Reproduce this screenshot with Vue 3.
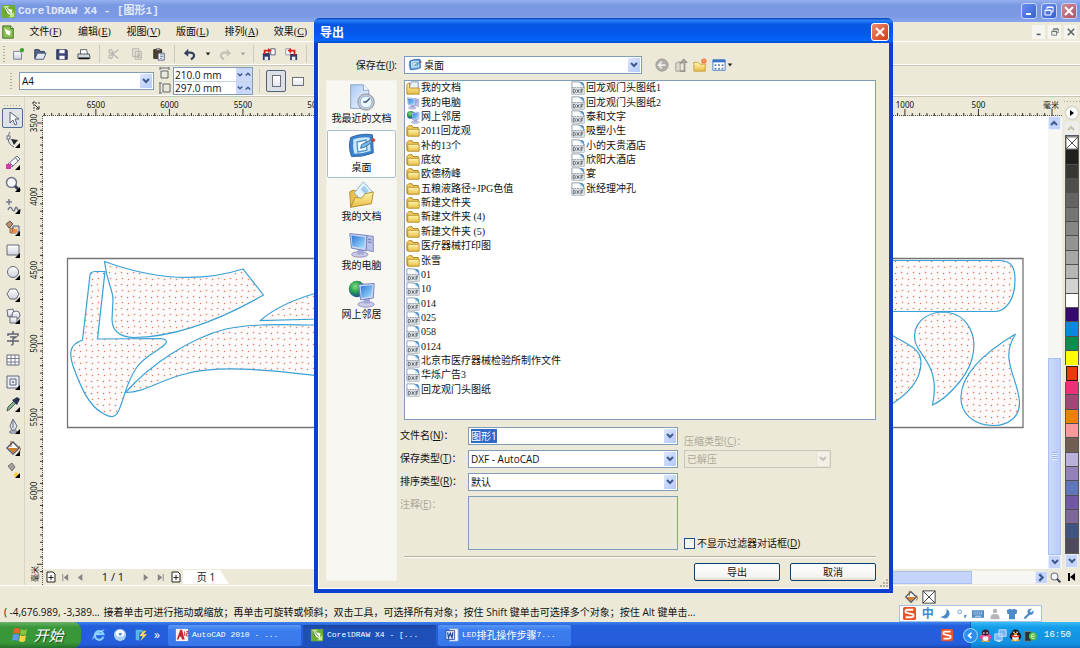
<script setup>
import { onMounted, ref } from 'vue'

const menus = [['文件', 'F'], ['编辑', 'E'], ['视图', 'V'], ['版面', 'L'], ['排列', 'A'], ['效果', 'C']]
const tools = [
  ['pick', '挑选', 0], ['node', '形状', 1], ['erase', '裁剪', 1], ['lens', '缩放', 1], ['curve', '手绘', 1], ['smart', '智能填充', 1],
  ['rect', '矩形', 1], ['oval', '椭圆', 1], ['poly', '多边形', 1], ['shapes', '基本形状', 1], ['text', '文本', 0], ['table', '表格', 0],
  ['blend', '交互', 1], ['drop', '滴管', 1], ['pen', '轮廓', 1], ['bucket', '填充', 1], ['ifill', '交互式填充', 1],
]
const swatches = [
  '#20211c', '#3a3732', '#504d4a', '#666364', '#757575', '#868686', '#949494', '#a7a7a6', '#b5b5b4', '#d2d2d1', '#ffffff',
  '#37096f', '#0a88dc', '#098c4c', '#fffb06', '#e93c0c', '#ee3078', '#a14776', '#ed8107', '#fa989b', '#705f52', '#bbb0d9',
  '#9381b9', '#6076b9', '#7058a6', '#7d6999', '#405482', '#50485c',
]
const folders = ['2011回龙观', '补的13个', '底纹', '欧德杨峰', '五粮液路径+JPG色值', '新建文件夹', '新建文件夹 (4)', '新建文件夹 (5)', '医疗器械打印图', '张雪']
const drawings = [
  '01', '10', '014', '025', '058', '0124', '北京市医疗器械检验所制作文件', '华烁广告3', '回龙观门头图纸',
  '回龙观门头图纸1', '回龙观门头图纸2', '泰和文字', '吸塑小生', '小的天贵酒店', '欣阳大酒店', '宴', '张经理冲孔',
]
const files = [
  { icon: 'docs', name: '我的文档' }, { icon: 'computer', name: '我的电脑' }, { icon: 'network', name: '网上邻居' },
  ...folders.map((name) => ({ icon: 'folder', name })),
  ...drawings.map((name) => ({ icon: 'dxf', name })),
]
const places = [['recent', '我最近的文档'], ['desktop', '桌面'], ['mydocs', '我的文档'], ['computer', '我的电脑'], ['network', '网上邻居']]

const STEP = 7.355
const hTicks = Array.from({ length: 139 }, (_, i) => 1009 - i * STEP)
const hLabels = Array.from({ length: 13 }, (_, i) => ({ x: 1009 - (i + 1) * STEP * 10, t: (i + 1) * 500 }))
  .filter((l) => l.x < 290 || l.x > 850)
const vTicks = Array.from({ length: 62 }, (_, i) => 7 + i * STEP)
const vLabels = [3500, 4000, 4500, 5000, 5500, 6000].map((t, i) => ({ y: 7 + i * STEP * 10, t }))

const shapes = [
  'M104.5 261.5 Q180 289 243 269 L263.5 295 Q190 337 134 337.5 C118 337 112 330 112 319 L113 300 C113 289 107 284 104.5 261.5Z',
  'M90 275 Q90 272 95 271.5 L105 271.5 L97.5 339 L160 338.5 Q168 339 166 343 C164 348 145 355 137 367 C125 384 125 398 118 412 Q114 420 104 414 C88 406 80 385 73 366 C69 353 69 345 82.5 340Z',
  'M125.5 392.5 C150 365 190 338 226 329 C255 323 285 325 320 325 L320 376 C280 371 220 364 185 374 C160 380 143 393 125.5 392.5Z',
  'M260.5 320.5 Q280 303 320 292 L320 319Z',
  'M885 260.5 H1000 C1012 261 1015 268 1015 280 C1015 298 1007 311 995 311.5 H885Z',
  'M942 312 C924 313 912 325 915 341 C918 356 941 365 932.5 405 C948 398 966 377 971 362 C980 334 966 312 942 312Z',
  'M1015.5 334 C999 360 1018 377 1019.5 402 C1020 417 1008 426 993 425.5 C972 425 960 412 961 396 C962 374 982 354 1015.5 334Z',
  'M885 331 C903 343 921 347 921 362 C921 381 907 396 885 408Z',
]
const fileName = ref('图形1')
const nameBox = ref(null)
onMounted(() => { nameBox.value.focus(); nameBox.value.select() })
</script>

<template>
  <svg class="defs" aria-hidden="true">
    <defs>
      <linearGradient id="gFolder" x1="0" y1="0" x2="0" y2="1"><stop offset="0" stop-color="#fff6b0" /><stop offset="1" stop-color="#e8bd45" /></linearGradient>
      <linearGradient id="gScreen" x1="0" y1="0" x2="1" y2="1"><stop offset="0" stop-color="#2f78d8" /><stop offset="1" stop-color="#a6e4fc" /></linearGradient>
      <linearGradient id="gPaper" x1="0" y1="0" x2="1" y2="1"><stop offset="0" stop-color="#a9c8f4" /><stop offset="1" stop-color="#f4f9ff" /></linearGradient>
      <radialGradient id="gGlobe" cx=".4" cy=".35" r=".7"><stop offset="0" stop-color="#7fe07c" /><stop offset=".5" stop-color="#2a9c52" /><stop offset="1" stop-color="#123f9c" /></radialGradient>
      <linearGradient id="gShape" x1="0" y1="0" x2="0" y2="1"><stop offset="0" stop-color="#fff" /><stop offset="1" stop-color="#ced0dc" /></linearGradient>
      <pattern id="dots" width="12" height="12" patternUnits="userSpaceOnUse">
        <rect width="12" height="12" fill="#fffafa" />
        <g fill="#e0805f"><circle cx="2.500" cy="2.500" r=".8" /><circle cx="8.500" cy="3.500" r=".8" /><circle cx="1.500" cy="8.500" r=".8" /></g><circle cx="7.500" cy="9.500" r=".8" fill="#8d86a0" />
      </pattern>
    </defs>
    <symbol id="i-corel" viewBox="0 0 16 16"><rect x="1" y="1" width="14" height="14" rx="1" fill="#6cae35" /><path d="M2 2h7l-5 5zM8 14l6-6v6z" fill="#c8e59c" /><path d="M3 3l5 2 4 1-1 6-4-2z" fill="#fff" /><path d="M5 4l5 6M3 3l3 7" stroke="#4c8a28" /></symbol>
    <symbol id="i-doc" viewBox="0 0 16 16"><path d="M2 1h9l3 3v11H2z" fill="#8cc152" stroke="#35631f" /><path d="M11 1v3h3" fill="#fff" stroke="#35631f" /><path d="M4 4l4 2 3 1-1 5-4-2z" fill="#fff" /></symbol>
    <symbol id="i-new" viewBox="0 0 16 16"><path d="M3 5h7l2 2v7H3z" fill="url(#gShape)" stroke="#6d7592" /><circle cx="12.500" cy="3.500" r="2.500" fill="#39a32c" /></symbol>
    <symbol id="i-open" viewBox="0 0 16 16"><path d="M2 13V3h5l1 2h5v3" fill="#56648c" stroke="#293452" /><path d="M2 14l3-7h10l-3 7z" fill="#e4e7f1" stroke="#3d4a70" /></symbol>
    <symbol id="i-save" viewBox="0 0 16 16"><path d="M2 3h11l1 1v10H2z" fill="#3f4678" stroke="#242a50" /><path d="M5 3h6v4H5zM5 10h6v4H5z" fill="#f5f5fa" /></symbol>
    <symbol id="i-print" viewBox="0 0 16 16"><path d="M4 8V3h7l1 5" fill="#fff" stroke="#545a63" /><path d="M1 8h13l1 5H1z" fill="#d4d9df" stroke="#3f4b55" /><path d="M2 13h12" stroke="#111" stroke-width="2" /></symbol>
    <symbol id="i-cut" viewBox="0 0 16 16"><g fill="none" stroke="#b9b8b2" stroke-width="1.500"><path d="M12 3L5 8l7 5" /><circle cx="3" cy="5" r="2" /><circle cx="3" cy="11" r="2" /><path d="M4.500 6l2 2-2 2" /></g></symbol>
    <symbol id="i-copy" viewBox="0 0 16 16"><path d="M3 2h7v9H3zM6 5h7v9H6z" fill="#e4e2d7" stroke="#b3b1a8" /><path d="M8 8h4M8 10h4M8 12h4" stroke="#b3b1a8" /></symbol>
    <symbol id="i-paste" viewBox="0 0 16 16"><path d="M2 3h9v10H2z" fill="#4e402d" stroke="#2b251c" /><path d="M5 2h4v2H5z" fill="#ccc" stroke="#555" /><path d="M7 7h7v8H7z" fill="#fff" stroke="#4c5880" /><path d="M9 9h4M9 11h4M9 13h3" stroke="#6a7698" /></symbol>
    <symbol id="i-undo" viewBox="0 0 16 16"><path d="M9 14c5-2 5-8-1-7.500H4" fill="none" stroke="#36405c" stroke-width="2.500" /><path d="M1 7l5-5v9z" fill="#36405c" /></symbol>
    <symbol id="i-redo" viewBox="0 0 16 16"><path d="M7 14c-5-2-5-8 1-7.500h4" fill="none" stroke="#c3c1b8" stroke-width="2.500" /><path d="M15 7l-5-5v9z" fill="#c3c1b8" /></symbol>
    <symbol id="i-import" viewBox="0 0 16 16"><path d="M1 7h8v8H1z" fill="#313a67" /><path d="M3 11h4v4H3z" fill="#e9eaf2" /><path d="M10 2h5v7h-5z" fill="#fff" stroke="#4a5070" /><path d="M3 8V4h5" fill="none" stroke="#d3251c" stroke-width="2" /><path d="M7 1l4 3-4 3z" fill="#d3251c" /></symbol>
    <symbol id="i-export" viewBox="0 0 16 16"><path d="M2 2h5v7H2z" fill="#fff" stroke="#8a8da0" /><path d="M7 8h8v7H7z" fill="#313a67" /><path d="M9 11h4v4H9z" fill="#e9eaf2" /><path d="M12 9V4H7" fill="none" stroke="#d3251c" stroke-width="2" /><path d="M8 1L4 4l4 3z" fill="#d3251c" /></symbol>
    <symbol id="i-launch" viewBox="0 0 16 16"><path d="M1 2h11v7H1z" fill="#fff" stroke="#313a67" /><path d="M1 3.500h11" stroke="#313a67" stroke-width="3" /></symbol>
    <symbol id="i-pick" viewBox="0 0 16 16"><path d="M5 2v11l3-3 2 5 2-1-2-5h4z" fill="#fff" stroke="#586078" /></symbol>
    <symbol id="i-node" viewBox="0 0 16 16"><path d="M5 0C2 4 2 12 9 15" fill="none" stroke="#666c86" /><rect x="2" y="4" width="3" height="3" fill="#fff" stroke="#666c86" /><path d="M6 7l7 1-4 5z" fill="#1c2531" /></symbol>
    <symbol id="i-erase" viewBox="0 0 16 16"><path d="M3 10l9-8 3 3-8 8z" fill="#f8f8fc" stroke="#686c85" /><path d="M5 9l3 3M10 3l3 4" stroke="#686c85" /><rect x="1" y="10" width="5" height="5" fill="#db36a8" /></symbol>
    <symbol id="i-lens" viewBox="0 0 16 16"><circle cx="6.500" cy="6.500" r="5" fill="#f5f7fb" stroke="#6c7288" stroke-width="1.500" /><path d="M10 10l5 5" stroke="#39445c" stroke-width="3" /></symbol>
    <symbol id="i-curve" viewBox="0 0 16 16"><path d="M4 1v6M1 4h6M3 12q2-5 4-1t3 0 3 1 2-1" fill="none" stroke="#777a8c" stroke-width="1.500" /></symbol>
    <symbol id="i-smart" viewBox="0 0 16 16"><path d="M1 4l4-3 3 3-4 4z" fill="#b98f71" stroke="#6b5b51" /><path d="M5 8h6v5H5z" fill="#ef9147" stroke="#8b7268" /><path d="M8 6h6v6H8z" fill="#e9d4c6" stroke="#4d5b83" /><path d="M8 9h4v4H8z" fill="#ef9147" /></symbol>
    <symbol id="i-rect" viewBox="0 0 16 16"><path d="M2 3h12v10H2z" fill="url(#gShape)" stroke="#686b7b" /></symbol>
    <symbol id="i-oval" viewBox="0 0 16 16"><circle cx="8" cy="8" r="5.500" fill="url(#gShape)" stroke="#686b7b" /></symbol>
    <symbol id="i-poly" viewBox="0 0 16 16"><path d="M5 3h6l3 5-3 5H5L2 8z" fill="url(#gShape)" stroke="#686b7b" /></symbol>
    <symbol id="i-shapes" viewBox="0 0 16 16"><path d="M2 2l6-1 1 6-6 2z" fill="url(#gShape)" stroke="#686b7b" /><circle cx="11" cy="7" r="4" fill="url(#gShape)" stroke="#686b7b" /><path d="M5 9h7v6H5z" fill="url(#gShape)" stroke="#686b7b" /></symbol>
    <symbol id="i-table" viewBox="0 0 16 16"><path d="M2 3h12v10H2z" fill="#fff" stroke="#686b7b" /><path d="M6 3v10M10 3v10M2 6.500h12M2 10h12" stroke="#787b92" /></symbol>
    <symbol id="i-blend" viewBox="0 0 16 16"><path d="M2 2h12v12H2zM5 5h6v6H5zM7.500 7.500h1v1h-1z" fill="#e9eaf3" stroke="#60687e" /></symbol>
    <symbol id="i-drop" viewBox="0 0 16 16"><path d="M2 15l1-4 6-6 2 2-6 6z" fill="#8cb596" stroke="#415b56" /><path d="M7 4l2-1 3-2 3 2-2 4-1 2z" fill="#29334f" /></symbol>
    <symbol id="i-pen" viewBox="0 0 16 16"><path d="M8 1L5 8l2 4h3l2-4zM5 13h7v2H5z" fill="#e7e8ef" stroke="#60687e" /><path d="M8 3v7" stroke="#60687e" /></symbol>
    <symbol id="i-bucket" viewBox="0 0 16 16"><path d="M2 8l6-6 6 6-6 6z" fill="#fff" stroke="#535b70" stroke-width="1.500" /><path d="M3 8h10l-5 5z" fill="#d37c25" /><path d="M6 7V1M14 6q3 4 0 6" fill="none" stroke="#99511f" /></symbol>
    <symbol id="i-ifill" viewBox="0 0 16 16"><path d="M3 4l4-3 3 4-3 4z" fill="#a5a09c" stroke="#74726f" /><path d="M8 14l3-4 4 3-3 2z" fill="#f7cd31" /></symbol>
    <symbol id="i-text" viewBox="0 0 16 16"><path d="M8 1v3M3 6V4h10v2M5 7h6L8 9v5q0 1-2 1M2 11h12" fill="none" stroke="#606372" stroke-width="1.500" /></symbol>
    <symbol id="i-folder" viewBox="0 0 16 16"><path d="M1 13V4l2-2h4l1 2h6v9z" fill="#f2cf60" stroke="#a97c1d" /><path d="M2 6h13v8H2z" fill="url(#gFolder)" stroke="#b18a27" /></symbol>
    <symbol id="i-docs" viewBox="0 0 16 16"><path d="M3 9l3-8h8v11z" fill="#e8f3ff" stroke="#7790b8" /><path d="M1 4l3-2v6h11v7H1z" fill="url(#gFolder)" stroke="#b18a27" /></symbol>
    <symbol id="i-dxf" viewBox="0 0 16 16"><path d="M1 1h9l5 5v9H1z" fill="#fff" stroke="#8994a0" /><path d="M9 1l6 6V3l-2-2z" fill="#6098c4" /><path d="M10 2v4h4z" fill="#d9ecfb" /><path d="M1 7h14v8H1z" fill="#dfe2e5" /><path d="M1 7.500h14" stroke="#8994a0" stroke-dasharray="2 1" /><path d="M2.500 9.500h1.500l1 1v2l-1 1H2.500zM6.500 9.500l3 4M9.500 9.500l-3 4M11.500 14V9.500H14M11.500 11.500h2" fill="none" stroke="#505a64" /></symbol>
    <symbol id="i-computer" viewBox="0 0 32 32"><path d="M21 6l8 1v17l-8-2z" fill="#bac1e8" stroke="#7e84bb" /><path d="M23 10l4 1M23 13l4 1" stroke="#6770ad" /><ellipse cx="14" cy="27" rx="9" ry="3" fill="#c9cbe9" stroke="#898dbd" /><path d="M12 20h6l1 7h-8z" fill="#a5a8d6" /><path d="M3 4l19 2-1 17-16-3z" fill="#d0d7f5" stroke="#6b7abb" /><path d="M5 6l15 2-1 12-13-2z" fill="url(#gScreen)" /></symbol>
    <symbol id="i-network" viewBox="0 0 32 32"><circle cx="11" cy="11" r="9" fill="url(#gGlobe)" /><ellipse cx="21" cy="28" rx="9" ry="3" fill="#c9cbe9" stroke="#898dbd" /><path d="M19 21h6l1 6h-8z" fill="#a5a8d6" /><path d="M13 6l17-1-1 16-14 2z" fill="#d0d7f5" stroke="#6b7abb" /><path d="M15 8l13-1-1 12-11 2z" fill="url(#gScreen)" /></symbol>
    <symbol id="i-recent" viewBox="0 0 32 32"><path d="M4 2h14l6 6v20H4z" fill="url(#gPaper)" stroke="#8aa0c6" /><path d="M18 2v6h6" fill="#fff" stroke="#8aa0c6" /><circle cx="21" cy="21" r="9" fill="#c6cbd4" stroke="#848b98" /><circle cx="21" cy="21" r="6.500" fill="#eaf7ff" stroke="#8fb2cf" /><path d="M25 17l-4 4h-3" fill="none" stroke="#35506e" stroke-width="1.500" /></symbol>
    <symbol id="i-desktop" viewBox="0 0 32 32"><path d="M4 6q12-5 24-3l1 20q-12 5-24 4-4-10-1-21z" fill="#3c83cc" stroke="#265d9d" /><path d="M7 8q9-3 18-2l1 15q-9 3-18 3-2-8-1-16z" fill="#c7e7fb" /><path d="M11 11l10-2 1 11-10 2z" fill="#f6fcff" stroke="#5595ca" stroke-width="1.500" /><path d="M15 18l1-4 10-5 2 2-9 6z" fill="#74b9e8" stroke="#336d9f" /><circle cx="29" cy="9" r="2" fill="#c94130" /></symbol>
    <symbol id="i-mydocs" viewBox="0 0 32 32"><path d="M3 12l4-2 6 2v13L4 29z" fill="#e9c04d" stroke="#b28b29" /><path d="M8 13L18 1l10 11-9 13z" fill="#e8f5ff" stroke="#85abcf" /><path d="M15 9l4-4 5 6-4 4z" fill="#9fcbed" /><path d="M4 29l5-11 7 1 4-5 9-2-2 13z" fill="url(#gFolder)" stroke="#b18a27" /></symbol>
    <symbol id="i-chev" viewBox="0 0 8 8"><path d="M1 2l3 3 3-3" fill="none" stroke="#3f5a8c" stroke-width="2" /></symbol>
    <symbol id="i-chevd" viewBox="0 0 8 8"><path d="M1 2l3 3 3-3" fill="none" stroke="#c4c2b5" stroke-width="2" /></symbol>
    <symbol id="i-tri" viewBox="0 0 8 8"><path d="M1 2h6L4 6z" fill="#222" /></symbol>
    <symbol id="i-back" viewBox="0 0 16 16"><circle cx="8" cy="8" r="7" fill="#aeaca6" stroke="#98968f" /><path d="M12 8H5M8 4L4 8l4 4" fill="none" stroke="#f2f0e8" stroke-width="2" /></symbol>
    <symbol id="i-up" viewBox="0 0 16 16"><path d="M2 6l5-2v11H2z" fill="#dddbd1" stroke="#99978f" /><path d="M7 15h5V6" fill="none" stroke="#99978f" stroke-width="2" /><path d="M7 6l4-5 4 4z" fill="#aaa8a0" stroke="#8b8981" /></symbol>
    <symbol id="i-newfolder" viewBox="0 0 16 16"><path d="M1 5h5l2 2h6v8H1z" fill="url(#gFolder)" stroke="#c69c38" /><circle cx="12.500" cy="3.500" r="3" fill="#ef6b31" /><path d="M12.500 0v7M9 3.500h7" stroke="#ffb47e" /></symbol>
    <symbol id="i-view" viewBox="0 0 16 16"><path d="M1 2h14v12H1z" fill="#fff" stroke="#3974c7" /><path d="M1 3.500h14" stroke="#3974c7" stroke-width="3" /><path d="M4 7v2M8 7v2M12 7v2M4 11v2M8 11v2M12 11v2" stroke="#5c7c9c" stroke-width="2" /></symbol>
    <symbol id="i-addpage" viewBox="0 0 12 12"><path d="M2 1h6l2 2v8H2z" fill="#fff" stroke="#222" /><path d="M6 4v5M3.500 6.500h5" stroke="#222" /></symbol>
    <symbol id="i-first" viewBox="0 0 10 10"><path d="M2 1v8" stroke="#848484" /><path d="M8 1v8L3 5z" fill="#848484" /></symbol>
    <symbol id="i-prev" viewBox="0 0 10 10"><path d="M7 1v8L2 5z" fill="#848484" /></symbol>
    <symbol id="i-next" viewBox="0 0 10 10"><path d="M3 1v8l5-4z" fill="#848484" /></symbol>
    <symbol id="i-last" viewBox="0 0 10 10"><path d="M8 1v8" stroke="#848484" /><path d="M2 1v8l5-4z" fill="#848484" /></symbol>
    <symbol id="i-min" viewBox="0 0 10 10"><path d="M2 8h5" stroke="currentColor" stroke-width="2" /></symbol>
    <symbol id="i-rest" viewBox="0 0 10 10"><path d="M3 3V1h6v5H7M1 4h6v5H1z" fill="none" stroke="currentColor" /><path d="M3 1.500h6M1 4.500h6" stroke="currentColor" /></symbol>
    <symbol id="i-x" viewBox="0 0 10 10"><path d="M1 1l8 8M9 1L1 9" stroke="currentColor" stroke-width="2" /></symbol>
    <symbol id="i-win" viewBox="0 0 18 16"><path d="M3 2q3-2 6 0L8 7q-3-2-6 0z" fill="#f0602b" /><path d="M10 2q3 2 6 0l-1 5q-3 2-6 0z" fill="#89c43c" /><path d="M2 8q3-2 6 0l-1 6q-3-2-6 0z" fill="#5b9af2" /><path d="M9 8q3 2 6 0l-1 6q-3 2-6 0z" fill="#fcd33c" /></symbol>
    <symbol id="i-ie" viewBox="0 0 16 16"><path d="M13 10a5 5 0 1 1 0-3H4" fill="none" stroke="#7fd0ff" stroke-width="2.500" /><path d="M1 13Q0 8 14 2" fill="none" stroke="#b5e4ff" /></symbol>
    <symbol id="i-bird" viewBox="0 0 16 16"><circle cx="8" cy="8" r="7" fill="#a9cef8" /><ellipse cx="8" cy="6" rx="5" ry="4" fill="#fff" /><path d="M6 6h5l-3 3z" fill="#3b7ddc" /></symbol>
    <symbol id="i-flash" viewBox="0 0 16 16"><path d="M2 2h8v3H6v9H2z" fill="#57b6ea" /><path d="M11 3l-5 6h4l-3 6 8-8h-4l3-4z" fill="#ffd843" /></symbol>
    <symbol id="i-acad" viewBox="0 0 16 16"><path d="M1 1h14v14H1z" fill="#f6f0ee" /><path d="M2 13L6 2h2l3 11H8L7 10H5l-1 3z" fill="#c8242e" /><path d="M11 4v5M13 4h2v2h-2v3h2" stroke="#c8242e" fill="none" /></symbol>
    <symbol id="i-word" viewBox="0 0 16 16"><path d="M5 1h10v14H5z" fill="#fff" stroke="#86a5dd" /><path d="M1 3h10v10H1z" fill="#e9effb" stroke="#274a97" /><path d="M3 5l1 6 2-5 2 5 1-6" fill="none" stroke="#224b9f" stroke-width="1.500" /></symbol>
    <symbol id="i-sogou" viewBox="0 0 16 16"><rect x="1" y="1" width="14" height="14" rx="2" fill="#e8542b" /><path d="M12 4H6Q3 4 4 7l8 2q1 3-2 3H4" fill="none" stroke="#fff" stroke-width="2" /></symbol>
    <symbol id="i-qqp" viewBox="0 0 16 16"><ellipse cx="8" cy="10" rx="7" ry="5" fill="#e94888" /><circle cx="8" cy="5" r="4.500" fill="#3c1c33" /><path d="M3 8q5 3 10 0" stroke="#f0569a" stroke-width="3" fill="none" /><ellipse cx="8" cy="12" rx="3.500" ry="3" fill="#fff" /><circle cx="6" cy="5" r="1" fill="#fff" /><circle cx="10" cy="5" r="1" fill="#fff" /><path d="M3 15h4M9 15h4" stroke="#f0a426" stroke-width="2" /></symbol>
    <symbol id="i-qq" viewBox="0 0 16 16"><ellipse cx="8" cy="9" rx="7" ry="6" fill="#191919" /><circle cx="8" cy="5" r="4.500" fill="#191919" /><ellipse cx="8" cy="11" rx="4" ry="4" fill="#fff" /><path d="M3 8q5 3 10 0" stroke="#e43425" stroke-width="2" fill="none" /><circle cx="6" cy="4" r="1" fill="#fff" /><circle cx="10" cy="4" r="1" fill="#fff" /><path d="M6 6h4M3 14h4M9 14h4" stroke="#f6a525" stroke-width="2" /></symbol>
    <symbol id="i-net" viewBox="0 0 16 16"><path d="M6 1h9v8H6zM1 6h9v8H1z" fill="#79b4ef" stroke="#dbe9fb" /><path d="M4 15h4" stroke="#dbe9fb" stroke-width="2" /></symbol>
    <symbol id="i-safe" viewBox="0 0 16 16"><path d="M1 3h8v12H1z" fill="#27323d" stroke="#759098" /><circle cx="11" cy="9" r="5" fill="#53b943" /><path d="M9 9h4M13 7q-4-2-4 2t4 2" fill="none" stroke="#fff" /></symbol>
    <symbol id="i-moon" viewBox="0 0 16 16"><path d="M10 1q1 9-8 11 9 5 12-3 1-5-4-8z" fill="#4d8ac8" /></symbol>
    <symbol id="i-punct" viewBox="0 0 16 16"><circle cx="5" cy="5" r="2.500" fill="none" stroke="#4d8ac8" /><path d="M11 9h3q0 4-3 5" fill="#4d8ac8" /></symbol>
    <symbol id="i-keys" viewBox="0 0 16 12"><path d="M0 1h16v10H0z" fill="#4d8ac8" /><path d="M2 3.500h12M2 6h12" stroke="#fff" stroke-dasharray="1.500 1" /><path d="M4 9h8" stroke="#fff" /></symbol>
    <symbol id="i-man" viewBox="0 0 16 16"><circle cx="8" cy="4" r="3" fill="#b5b5b5" /><path d="M2 15q-1-7 6-7t6 7z" fill="#b5b5b5" /></symbol>
    <symbol id="i-shirt" viewBox="0 0 16 16"><path d="M1 3l4-2q3 2 6 0l4 2-1 5h-2v7H4V8H2z" fill="#4d8ac8" /></symbol>
    <symbol id="i-wrench" viewBox="0 0 16 16"><path d="M2 14l7-7" stroke="#4d8ac8" stroke-width="3" /><path d="M14 3l-3 3-2-2 3-3q-6-1-6 4t5 4q4-1 3-6z" fill="#4d8ac8" /></symbol>
    <symbol id="i-none" viewBox="0 0 16 16"><path d="M1 1h14v14H1z" fill="#fff" stroke="#333" /><path d="M1 1l14 14M15 1L1 15" stroke="#333" /></symbol>
  </svg>

  <div class="desk">
    <header class="titlebar">
      <svg class="ic15"><use href="#i-corel" /></svg>
      <h1>CorelDRAW X4 - [图形1]</h1>
      <div class="winbtns">
        <button aria-label="最小化"><svg><use href="#i-min" /></svg></button>
        <button aria-label="还原"><svg><use href="#i-rest" /></svg></button>
        <button class="close" aria-label="关闭"><svg><use href="#i-x" /></svg></button>
      </div>
    </header>

    <nav class="menubar">
      <svg class="ic14"><use href="#i-doc" /></svg>
      <button v-for="m in menus" :key="m[1]">{{ m[0] }}(<u>{{ m[1] }}</u>)</button>
      <div class="mdibtns">
        <button aria-label="最小化文档"><svg><use href="#i-min" /></svg></button>
        <button aria-label="还原文档"><svg><use href="#i-rest" /></svg></button>
        <button aria-label="关闭文档"><svg><use href="#i-x" /></svg></button>
      </div>
    </nav>

    <div class="toolbar">
      <i class="grip"></i>
      <button v-for="n in ['new', 'open', 'save', 'print']" :key="n" :aria-label="n"><svg><use :href="'#i-' + n" /></svg></button>
      <i class="sep"></i>
      <button v-for="n in ['cut', 'copy', 'paste']" :key="n" :aria-label="n"><svg><use :href="'#i-' + n" /></svg></button>
      <i class="sep"></i>
      <button aria-label="撤消"><svg><use href="#i-undo" /></svg></button>
      <button class="thin" aria-label="撤消列表"><svg class="tri"><use href="#i-tri" /></svg></button>
      <button aria-label="重做"><svg><use href="#i-redo" /></svg></button>
      <button class="thin dim" aria-label="重做列表"><svg class="tri"><use href="#i-tri" /></svg></button>
      <i class="sep"></i>
      <button aria-label="导入"><svg><use href="#i-import" /></svg></button>
      <button aria-label="导出文件"><svg><use href="#i-export" /></svg></button>
      <i class="sep"></i>
      <button aria-label="应用程序"><svg><use href="#i-launch" /></svg></button>
    </div>

    <div class="propbar">
      <i class="grip"></i>
      <div class="combo paper">
        <select aria-label="纸张类型"><option>A4</option></select>
        <span class="arrow"><svg><use href="#i-chev" /></svg></span>
      </div>
      <div class="dims">
        <svg class="dimicon" viewBox="0 0 12 27"><path d="M2 4h7v7H2zM1 1h9M1 0v3M10 0v3M4 17h7v8H4zM1 16v10M0 16h3M0 26h3" fill="none" stroke="#606470" /></svg>
        <div class="dimfields">
          <div v-for="d in [['宽度', '210.0 mm'], ['高度', '297.0 mm']]" :key="d[0]" class="dim">
            <input type="text" :aria-label="d[0]" :value="d[1]">
            <span><svg><use href="#i-chev" /></svg></span><span class="flip"><svg><use href="#i-chev" /></svg></span>
          </div>
        </div>
      </div>
      <i class="sep tall"></i>
      <button class="orient on" aria-label="纵向"><i class="sheet"></i></button>
      <button class="orient" aria-label="横向"><i class="sheet wide"></i></button>
      <i class="sep tall"></i>
    </div>

    <main class="work">
      <aside class="toolbox">
        <i class="hgrip"></i>
        <button v-for="(t, i) in tools" :key="t[0]" :class="{ on: i === 0 }" :aria-label="t[1]">
          <svg><use :href="'#i-' + t[0]" /><path v-if="t[2]" d="M15 11v5h-5z" fill="#000" /></svg>
        </button>
      </aside>
      <div class="corner"><svg viewBox="0 0 18 19"><path d="M7 6h8M9 4v10" stroke="#333" stroke-dasharray="2 1" /><path d="M10 8l4 4M14 9v3h-3" stroke="#222" fill="none" /></svg></div>
      <svg class="hruler">
        <path d="M0 18.500H2000" stroke="#55534c" stroke-dasharray="1 1" />
        <path v-for="(x, i) in hTicks" :key="i" :d="`M${x} ${i % 10 ? 16 : 12}V19`" stroke="#333" />
        <text v-for="l in hLabels" :key="l.t" :x="l.x" y="11" text-anchor="middle">{{ l.t }}</text>
        <text x="1008" y="11" text-anchor="middle">毫米</text>
      </svg>
      <svg class="vruler">
        <path d="M17.500 0V469" stroke="#55534c" stroke-dasharray="1 1" />
        <path v-for="(y, i) in vTicks" :key="i" :d="`M${i % 10 ? 15 : 12} ${y}H18`" stroke="#333" />
        <text v-for="l in vLabels" :key="l.t" :transform="`translate(12 ${l.y}) rotate(-90)`" text-anchor="middle">{{ l.t }}</text>
        <text transform="translate(13 458) rotate(-90)" text-anchor="middle">毫米</text>
      </svg>
      <div class="canvas">
        <svg viewBox="43 116 1005 453" preserveAspectRatio="xMinYMin slice">
          <path d="M67.500 258.500H1023V427.500H67.500z" fill="#fff" stroke="#757579" stroke-width="1.300" />
          <path v-for="(d, i) in shapes" :key="i" :d="d" fill="url(#dots)" stroke="#38a1d6" stroke-width="1.200" />
        </svg>
      </div>
      <div class="vscroll">
        <button class="flip" aria-label="向上滚动"><svg><use href="#i-chev" /></svg></button>
        <span class="track"></span><span class="thumb"></span>
        <button aria-label="向下滚动"><svg><use href="#i-chev" /></svg></button>
      </div>
      <div class="pagenav">
        <button aria-label="前加页"><svg class="ic12"><use href="#i-addpage" /></svg></button>
        <button aria-label="首页"><svg><use href="#i-first" /></svg></button>
        <button aria-label="上一页"><svg><use href="#i-prev" /></svg></button>
        <span class="count">1 / 1</span>
        <button aria-label="下一页"><svg><use href="#i-next" /></svg></button>
        <button aria-label="末页"><svg><use href="#i-last" /></svg></button>
        <button aria-label="后加页"><svg class="ic12"><use href="#i-addpage" /></svg></button>
        <button class="tab">页 1</button>
        <span class="gap"></span><span class="hthumb"></span><span class="htrack"></span>
        <button class="hright" aria-label="向右滚动"><svg><use href="#i-chev" /></svg></button>
      </div>
      <button class="navzoom" aria-label="导航"><svg><use href="#i-lens" /></svg></button>
      <aside class="palette">
        <i class="hgrip"></i>
        <button class="play" aria-label="调色板菜单"><svg viewBox="0 0 10 10"><path d="M3 2v6l4-3z" /></svg></button>
        <button class="pscroll flip off" aria-label="颜色向上"><svg><use href="#i-chevd" /></svg></button>
        <div class="swatches">
          <button aria-label="无填充"><svg preserveAspectRatio="none"><use href="#i-none" /></svg></button>
          <button v-for="c in swatches" :key="c" :class="{ sel: c === '#e93c0c' }" :style="{ background: c }" :aria-label="c"></button>
        </div>
        <button class="pscroll" aria-label="颜色向下"><svg><use href="#i-chev" /></svg></button>
        <button class="pend" aria-label="展开调色板"><svg viewBox="0 0 10 10"><path d="M1 1h2v8H1zM8 1v8L3 5z" /></svg></button>
      </aside>
    </main>

    <footer class="status">
      <div class="fillinfo"><svg><use href="#i-bucket" /></svg><svg><use href="#i-none" /></svg></div>
      <p><span>( -4,676.989, -3,389...</span> 接着单击可进行拖动或缩放；再单击可旋转或倾斜；双击工具，可选择所有对象；按住 Shift 键单击可选择多个对象；按住 Alt 键单击...</p>
      <div class="ime">
        <svg class="big"><use href="#i-sogou" /></svg><b>中</b>
        <svg v-for="n in ['moon', 'punct', 'keys', 'man', 'shirt', 'wrench']" :key="n"><use :href="'#i-' + n" /></svg>
      </div>
    </footer>

    <div class="taskbar">
      <button class="start"><svg><use href="#i-win" /></svg>开始</button>
      <div class="quick">
        <button aria-label="浏览器"><svg><use href="#i-ie" /></svg></button>
        <button aria-label="聊天"><svg><use href="#i-bird" /></svg></button>
        <button aria-label="下载"><svg><use href="#i-flash" /></svg></button>
        <span>»</span>
      </div>
      <button class="task"><svg><use href="#i-acad" /></svg><tt>AutoCAD 2010 - ...</tt></button>
      <button class="task active"><svg><use href="#i-corel" /></svg><tt>CorelDRAW X4 - [...</tt></button>
      <button class="task"><svg><use href="#i-word" /></svg><tt>LED</tt>排孔操作步骤<tt>7...</tt></button>
      <svg class="lang"><use href="#i-sogou" /></svg>
      <div class="tray">
        <button class="expand" aria-label="显示隐藏的图标"><svg viewBox="0 0 10 10"><path d="M6 2L3 5l3 3" fill="none" stroke="#fff" stroke-width="2" /></svg></button>
        <svg v-for="n in ['qqp', 'net', 'qq', 'safe']" :key="n"><use :href="'#i-' + n" /></svg>
        <time>16:50</time>
      </div>
    </div>

    <section class="dialog" role="dialog" aria-labelledby="dlgtitle">
      <div class="dlghead"><h2 id="dlgtitle">导出</h2><button aria-label="关闭对话框"><svg><use href="#i-x" /></svg></button></div>
      <div class="dlgbody">
        <div class="lookin">
          <label for="lookin">保存在(<u>I</u>):</label>
          <div class="combo">
            <svg class="lead"><use href="#i-desktop" /></svg>
            <select id="lookin"><option>桌面</option></select>
            <span class="arrow"><svg><use href="#i-chev" /></svg></span>
          </div>
          <div class="dlgtools">
            <button aria-label="后退"><svg><use href="#i-back" /></svg></button>
            <button aria-label="向上一级"><svg><use href="#i-up" /></svg></button>
            <button aria-label="新建文件夹按钮"><svg><use href="#i-newfolder" /></svg></button>
            <button class="views" aria-label="查看"><svg><use href="#i-view" /></svg><svg class="tri"><use href="#i-tri" /></svg></button>
          </div>
        </div>
        <div class="cols">
          <nav class="places">
            <button v-for="p in places" :key="p[1]" :class="{ on: p[0] === 'desktop' }"><svg><use :href="'#i-' + p[0]" /></svg>{{ p[1] }}</button>
          </nav>
          <div class="right">
            <ul class="files">
              <li v-for="f in files" :key="f.name"><svg><use :href="'#i-' + f.icon" /></svg>{{ f.name }}</li>
            </ul>
            <div class="form">
              <label for="fname">文件名(<u>N</u>)：</label>
              <div class="combo"><input id="fname" ref="nameBox" v-model="fileName" type="text"><span class="arrow"><svg><use href="#i-chev" /></svg></span></div>
              <label class="off low" for="comp">压缩类型(<u>C</u>)：</label>
              <label for="ftype">保存类型(<u>T</u>)：</label>
              <div class="combo"><select id="ftype"><option>DXF - AutoCAD</option></select><span class="arrow"><svg><use href="#i-chev" /></svg></span></div>
              <div class="combo off comp"><select id="comp" disabled><option>已解压</option></select><span class="arrow"><svg><use href="#i-chevd" /></svg></span></div>
              <label for="sort">排序类型(<u>R</u>)：</label>
              <div class="combo"><select id="sort"><option>默认</option></select><span class="arrow"><svg><use href="#i-chev" /></svg></span></div>
              <span></span>
              <label class="off" for="notes">注释(<u>E</u>)：</label>
              <textarea id="notes" disabled></textarea>
              <label class="check"><input type="checkbox"><span>不显示过滤器对话框(<u>D</u>)</span></label>
            </div>
            <div class="actions"><button>导出</button><button>取消</button></div>
          </div>
        </div>
        <svg class="resize" viewBox="0 0 9 9"><path d="M7 1h2M4 4h2M7 4h2M1 7h2M4 7h2M7 7h2" stroke="#b5b19f" stroke-width="2" /></svg>
      </div>
    </section>
  </div>
</template>

<style>
html, body { margin: 0; height: 100%; overflow: hidden; background: #ece9d8; }
</style>

<style scoped>
* { box-sizing: border-box; }
.defs { position: absolute; width: 0; height: 0; }
.desk { position: relative; display: flex; flex-direction: column; height: 100vh; background: #ece9d8; color: #111; font: 10px/14px "Open Sans", "Noto Sans CJK SC", sans-serif; }
button, input, select, textarea { font: inherit; color: inherit; margin: 0; padding: 0; border: 0; background: none; border-radius: 0; outline: 0; }
button { display: flex; align-items: center; justify-content: center; white-space: nowrap; }
svg { display: block; flex: none; }
h1, h2, p, ul { margin: 0; padding: 0; list-style: none; }
.ic15 { width: 15px; height: 15px; }
.ic14 { width: 14px; height: 14px; }
.flip { transform: rotate(180deg); }

.titlebar { flex: none; display: flex; align-items: center; height: 22px; padding: 0 3px 0 1px; gap: 2px; background: linear-gradient(#95b1f0, #7a98e2 25%, #7b99e4 70%, #88a5ec); }
.titlebar h1 { font: bold 11px/16px "Liberation Mono", "Noto Sans CJK SC", monospace; color: #e0eafc; white-space: pre; }
.winbtns { display: flex; gap: 4px; margin-left: auto; }
.winbtns button { width: 16px; height: 16px; border: 1px solid #c7d6f8; border-radius: 3px; background: linear-gradient(135deg, #6c8ff0, #345ed2); color: #fff; }
.winbtns .close { background: linear-gradient(135deg, #cf8894, #b0526a); }
.winbtns svg { width: 10px; height: 10px; }

.menubar { flex: none; display: flex; align-items: center; height: 20px; padding: 0 3px 0 1px; border-bottom: 1px solid #fff; font-family: "Liberation Serif", "Noto Sans CJK SC", serif; }
.menubar > button { width: 49px; height: 18px; }
.menubar > svg { margin-right: 6px; }
.mdibtns { display: flex; gap: 3px; margin-left: auto; }
.mdibtns button { width: 13px; height: 14px; background: #f6f5ef; color: #5c655f; }
.mdibtns svg { width: 8px; height: 8px; }

.toolbar, .propbar { flex: none; display: flex; align-items: center; border-bottom: 1px solid #c8c5b5; box-shadow: inset 0 -1px #fff; }
.toolbar { height: 24px; padding-left: 3px; }
.toolbar button { width: 22px; height: 20px; }
.toolbar button svg { width: 14px; height: 14px; }
.toolbar .thin { width: 13px; }
.toolbar .dim { opacity: .35; }
.toolbar button .tri, .views .tri { width: 6px; height: 6px; }
.grip { width: 2px; height: 16px; margin-right: 2px; background: repeating-linear-gradient(#b0ad9d 0 1px, transparent 1px 3px); }
.sep { width: 1px; height: 18px; margin: 0 4px; background: #cdcabb; }
.sep.tall { height: 24px; margin: 0 6px; }
.propbar { height: 31px; padding-left: 10px; }
.propbar > .grip { margin-right: 7px; }
.paper { width: 135px; }
.dims { display: flex; gap: 2px; margin-left: 5px; }
.dimicon { width: 12px; height: 27px; }
.dimfields { width: 80px; border: 1px solid #7f9db9; background: #fff; }
.dim { display: flex; height: 13px; }
.dim + .dim { border-top: 1px solid #c5d2e0; }
.dim input { width: 62px; flex: 1; padding-left: 1px; line-height: 12px; }
.dim span { width: 9px; display: grid; place-items: center; background: #c9d8fb; }
.dim svg { width: 6px; height: 6px; }
.orient { width: 20px; height: 22px; margin-right: 2px; border: 1px solid transparent; border-radius: 2px; }
.orient.on { border-color: #4f6278; background: #dcdfe4; }
.sheet { width: 9px; height: 12px; border: 1px solid #6b6e7b; background: linear-gradient(#fff, #e6e6ee); }
.sheet.wide { width: 12px; height: 9px; }

.combo { display: flex; align-items: stretch; height: 18px; border: 1px solid #7f9db9; background: #fff; }
.combo select, .combo input { flex: 1; min-width: 0; padding-left: 2px; appearance: none; line-height: 14px; }
.combo .arrow { width: 14px; display: grid; place-items: center; background: linear-gradient(135deg, #dbe6ff, #b3c9f8); border: 1px solid #fff; }
.combo .arrow svg { width: 8px; height: 8px; }
.combo.off { border-color: #c9c7ba; background: #ece9d8; color: #aca899; }
.combo.off select { opacity: 1; }
.combo.off .arrow { background: #f3f1e7; border-color: #e6e3d4; }
.combo .lead { width: 14px; height: 14px; margin: 1px 0 0 3px; }

.work { flex: 1; min-height: 0; display: grid; grid-template-columns: 25px 18px minmax(0, 1fr) 14px 18px; grid-template-rows: 19px minmax(0, 1fr) 16px; }
.toolbox { grid-row: 1 / 4; padding: 4px 2px 0; border-right: 1px solid #d9d6c8; }
.hgrip { display: block; width: 16px; height: 3px; margin: 3px auto 1px; background: repeating-linear-gradient(90deg, #aaa797 0 1px, transparent 1px 3px) center / 100% 1px no-repeat; }
.toolbox button { width: 21px; height: 20px; margin-bottom: 2px; border: 1px solid transparent; border-radius: 2px; }
.toolbox button.on { border-color: #4f6e95; background: #dfe2e8; }
.toolbox svg { width: 16px; height: 16px; }
.corner svg { width: 18px; height: 19px; }
.hruler { grid-column: 3 / 5; width: 100%; height: 19px; }
.vruler { grid-column: 2; grid-row: 2 / 4; width: 18px; height: 100%; overflow: visible; }
.hruler text, .vruler text { font: 8px "Noto Sans", "Noto Sans CJK SC", sans-serif; fill: #111; }
.canvas { grid-column: 3; grid-row: 2; background: #fff; overflow: hidden; }
.canvas svg { width: 100%; height: 100%; }
.vscroll { grid-column: 4; grid-row: 2; display: flex; flex-direction: column; background: #f6f6f2; }
.vscroll button, .pscroll, .hright { flex: none; width: 13px; height: 14px; border: 1px solid #e7eefe; border-radius: 2px; background: #c4d4fa; }
.vscroll svg, .pscroll svg, .hright svg { width: 8px; height: 8px; }
.vscroll .track { flex: 229; }
.vscroll .thumb { flex: 196; width: 13px; border: 1px solid #a9c0f5; background: repeating-linear-gradient(#98b0ec 0 1px, #eef4ff 1px 2px) center / 5px 8px no-repeat, linear-gradient(90deg, #cbdafc, #bacdf9); }
.pagenav { grid-column: 3; grid-row: 3; display: flex; align-items: center; background: #ece9d8; }
.pagenav button { width: 15px; height: 16px; }
.pagenav svg { width: 9px; height: 9px; }
.pagenav .ic12 { width: 12px; height: 12px; }
.count { width: 50px; text-align: center; font-size: 11px; }
.pagenav .tab { width: 46px; height: 14px; background: #fff; clip-path: polygon(0 0, 80% 0, 100% 100%, 0 100%); }
.gap { flex: 0 1 100px; }
.hthumb { height: 13px; border: 1px solid #a9c0f5; background: #c4d4fa; flex: 0 1 643px; }
.htrack { flex: 1 0 56px; height: 13px; background: #f6f6f2; }
.pagenav .hright { width: 13px; height: 13px; transform: rotate(-90deg); }
.navzoom svg { width: 11px; height: 11px; }
.palette { grid-column: 5; grid-row: 1 / 4; display: flex; flex-direction: column; align-items: center; padding-left: 1px; }
.play { width: 12px; height: 12px; margin: 3px 0; border-radius: 50%; background: #fff; box-shadow: 0 0 2px #888; }
.play svg, .pend svg { width: 10px; height: 10px; }
.pscroll.off { background: #efede4; height: 13px; }
.swatches { flex: 1; display: flex; flex-direction: column; width: 14px; border: 1px solid #58585a; }
.swatches button { flex: 1; border-bottom: 1px solid #4f4f50; overflow: hidden; }
.swatches svg { width: 14px; height: 14px; }
.swatches .sel { border: 1px solid #301505; outline: 1px solid #ece9d8; }
.pend { height: 17px; }

.status { flex: none; position: relative; height: 37px; padding: 3px 4px 0; border-top: 1px solid #fff; }
.fillinfo { display: flex; align-items: center; gap: 4px; padding-left: 84%; height: 15px; }
.fillinfo svg { width: 14px; height: 14px; }
.status p { margin-top: 1px; white-space: nowrap; }
.status p span { display: inline-block; width: 97px; }
.ime { position: absolute; right: 38px; bottom: 0; display: flex; align-items: center; justify-content: space-between; width: 143px; height: 17px; padding: 0 6px 0 2px; border: 1px solid #a7c3e4; background: #fff; }
.ime svg { width: 12px; height: 12px; }
.ime .big { width: 15px; height: 15px; }
.ime b { color: #4787c8; font-size: 12px; }

.taskbar { flex: none; display: flex; align-items: center; height: 26px; background: linear-gradient(#3d83ee, #245edb 15%, #245edc 85%, #1c45ac); color: #fff; }
.start { width: 81px; height: 26px; gap: 4px; padding-right: 6px; border-radius: 0 8px 8px 0; background: linear-gradient(#6ab569, #3a963a 20%, #389838 80%, #23702b); font-size: 15px; font-style: italic; text-shadow: 1px 1px 1px #1b471b; }
.start svg { width: 18px; height: 16px; }
.quick { display: flex; align-items: center; width: 87px; padding-left: 7px; }
.quick button { width: 21px; height: 20px; }
.quick svg { width: 14px; height: 14px; }
.quick span { font-size: 12px; padding-left: 3px; }
.task { justify-content: flex-start; width: 133px; height: 21px; margin-right: 2px; padding-left: 7px; border-radius: 2px; background: linear-gradient(#5a97f7, #3b7cef 25%, #3878ea); }
.task.active { background: linear-gradient(#1b479f, #1e50b8 25%); }
.task svg { width: 14px; height: 14px; margin-right: 3px; }
.task tt { font: 8px/14px "Liberation Mono", monospace; white-space: pre; }
.lang { width: 14px; height: 14px; margin: 0 16px 0 auto; }
.tray { display: flex; align-items: center; width: 110px; height: 26px; gap: 2px; background: linear-gradient(#3bbbf8, #139de8 20%, #1290e0 85%, #1070c4); border-left: 1px solid #0c63b5; }
.tray > svg { width: 13px; height: 13px; }
.expand { width: 13px; height: 13px; margin-left: -7px; border-radius: 50%; background: #2f8df0; box-shadow: 0 0 0 1px #8fd0fb; }
.expand svg { width: 9px; height: 9px; }
.tray time { margin-left: 5px; font: 9px/14px "Liberation Mono", monospace; }

.dialog { position: absolute; left: 314px; right: 187px; top: 18px; border: solid #0b3fd0; border-width: 0 4px 4px; border-radius: 6px 6px 0 0; background: #ece9d8; box-shadow: inset 0 -1px #fff, inset 1px 0 #fff; }
.dlghead { display: flex; align-items: center; justify-content: space-between; height: 25px; margin: 0 -4px; padding: 2px 4px 0 6px; border-radius: 6px 6px 0 0; background: linear-gradient(#0846b5, #2a80f8 10%, #0557e3 25%, #0458ea 60%, #0664fb 90%, #0449cc); }
.dlghead h2 { font: bold 12px/16px "Noto Sans CJK SC", sans-serif; color: #fff; }
.dlghead button { width: 18px; height: 18px; border: 1px solid #fff; border-radius: 3px; background: linear-gradient(135deg, #ee8a6c, #d23c16); color: #fff; }
.dlghead svg { width: 10px; height: 10px; }
.dlgbody { position: relative; padding: 13px 13px 8px 8px; }
.lookin { display: flex; align-items: center; height: 18px; margin-bottom: 6px; }
.lookin label { width: 71px; margin-right: 7px; text-align: right; }
.lookin .combo { width: 238px; }
.dlgtools { display: flex; align-items: center; margin-left: 10px; }
.dlgtools button { width: 19px; height: 18px; }
.dlgtools svg { width: 14px; height: 14px; }
.dlgtools .views { width: 26px; gap: 1px; }
.cols { display: flex; gap: 3px; }
.places { flex: none; width: 71px; background: #f8f7f1; border: 1px solid #f4f2e8; }
.places button { flex-direction: column; width: 69px; height: 48px; margin-bottom: 1px; padding-bottom: 3px; border: 1px solid transparent; border-radius: 2px; line-height: 12px; }
.places button.on { background: #fff; border-color: #aabfd6; }
.places svg { width: 29px; height: 29px; }
.right { flex: 1; min-width: 0; }
.files { display: grid; grid-auto-flow: column; grid-template-rows: repeat(22, minmax(0, 1fr)); grid-template-columns: 165px 165px; height: 340px; margin-left: 4px; padding: 0 1px 22px; border: 1px solid #7f9db9; background: #fff; font-family: "Liberation Serif", "Noto Sans CJK SC", serif; }
.files li { display: flex; align-items: center; gap: 1px; white-space: pre; }
.files svg { width: 14px; height: 14px; }
.form { display: grid; grid-template-columns: 68px 210px minmax(0, 1fr); column-gap: 0; row-gap: 5px; grid-template-rows: 18px 18px 18px 54px; margin-top: 7px; }
.form label { line-height: 16px; white-space: nowrap; }
.form label.off { color: #aca899; }
.form .low { padding: 7px 0 0 6px; line-height: 14px; }
.form .comp { width: 147px; margin-left: 6px; }
.form input::selection { background: #316ac5; color: #fff; }
textarea { resize: none; border: 1px solid #7f9db9; background: #ebe8d7; }
.form .check { align-self: end; display: flex; align-items: center; gap: 2px; padding-left: 6px; line-height: 14px; }
.check input { appearance: none; width: 11px; height: 11px; border: 1px solid #1c5180; background: #f4f4f0; }
.actions { display: flex; justify-content: flex-end; gap: 10px; margin: 6px 0 0 4px; padding-top: 6px; border-top: 1px solid #b9b29a; box-shadow: inset 0 1px #fff; }
.actions button { width: 86px; height: 18px; border: 1px solid #103c6e; border-radius: 2px; background: linear-gradient(#fff, #f4f3ee 80%, #dedbd0); }
.resize { position: absolute; right: 1px; bottom: 1px; width: 9px; height: 9px; }
</style>
